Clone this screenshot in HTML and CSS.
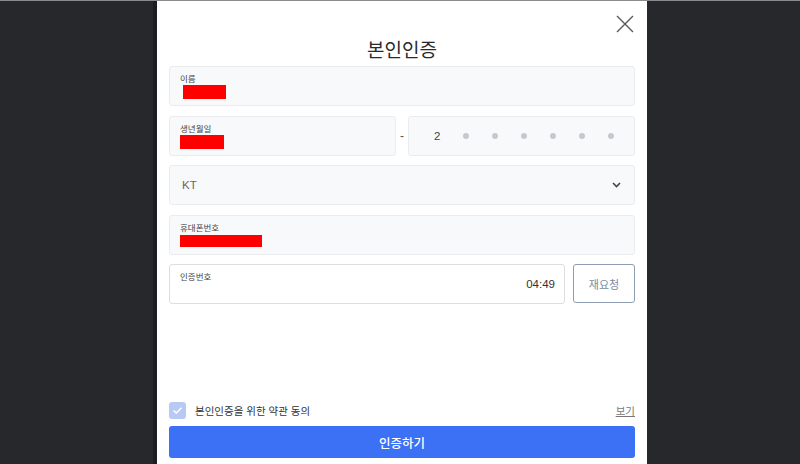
FILE: index.html
```html
<!DOCTYPE html>
<html lang="ko">
<head>
<meta charset="utf-8">
<title>본인인증</title>
<link rel="stylesheet" href="styles.css">
</head>
<body>
<div class="stage">
  <div class="modal">
    <button class="close" aria-label="닫기">
      <svg width="18" height="18" viewBox="0 0 18 18"><path d="M1 1 L17 17 M17 1 L1 17" stroke="#5a5a5a" stroke-width="1.4" fill="none"/></svg>
    </button>
    <div class="header"><h1 class="title">본인인증</h1></div>
    <div class="form">
      <div class="field">
        <span class="label">이름</span>
        <span class="redact redact-name"></span>
      </div>
      <div class="row">
        <div class="field field-half">
          <span class="label">생년월일</span>
          <span class="redact redact-birth"></span>
        </div>
        <span class="dash">-</span>
        <div class="field field-half back">
          <span class="digit">2</span>
          <span class="dot"></span><span class="dot"></span><span class="dot"></span><span class="dot"></span><span class="dot"></span><span class="dot"></span>
        </div>
      </div>
      <div class="field select">
        <span class="select-text">KT</span>
        <svg class="chev" width="9" height="6" viewBox="0 0 9 6"><path d="M1 1 L4.5 4.5 L8 1" stroke="#444" stroke-width="1.6" fill="none"/></svg>
      </div>
      <div class="field">
        <span class="label">휴대폰번호</span>
        <span class="redact redact-phone"></span>
      </div>
      <div class="row">
        <div class="field code">
          <span class="label">인증번호</span>
          <span class="timer">04:49</span>
        </div>
        <button class="resend">재요청</button>
      </div>
    </div>
    <div class="bottom">
      <div class="agree">
        <span class="check">
          <svg width="11" height="9" viewBox="0 0 11 9"><path d="M1.5 4.5 L4.3 7 L9.5 1.8" stroke="#fff" stroke-width="1.5" fill="none"/></svg>
        </span>
        <span class="agree-text">본인인증을 위한 약관 동의</span>
        <a class="view" href="#">보기</a>
      </div>
      <button class="submit">인증하기</button>
    </div>
  </div>
</div>
</body>
</html>
```
FILE: styles.css
```css
* { box-sizing: border-box; }
html, body { margin: 0; padding: 0; }
body {
  background: #26282c;
  font-family: "Noto Sans CJK KR", "Noto Sans", sans-serif;
  height: 464px;
  overflow: hidden;
  border-top: 1px solid #8a8b8e;
}
.stage {
  display: flex;
  justify-content: center;
  height: 463px;
  padding-left: 4px;
}
.modal {
  position: relative;
  width: 490px;
  height: 463px;
  background: #fff;
  box-shadow: -4px 0 0 #1c1d20;
  padding: 0 12px 6px;
  display: flex;
  flex-direction: column;
}
.close {
  position: absolute;
  top: 14px;
  right: 13px;
  padding: 0;
  border: 0;
  background: none;
  width: 18px;
  height: 18px;
}
.close svg { display: block; }
.header {
  height: 65px;
  display: flex;
  align-items: flex-end;
  justify-content: center;
  padding-bottom: 5px;
}
.title {
  margin: 0;
  font-size: 19px;
  line-height: 24px;
  font-weight: 400;
  color: #2a2a2a;
}
.form {
  display: flex;
  flex-direction: column;
  gap: 9.5px;
}
.row {
  display: flex;
  align-items: stretch;
}
.field {
  position: relative;
  height: 40px;
  background: #f8f9fb;
  border: 1px solid #eaecef;
  border-radius: 3px;
  padding: 6px 10px 0;
  display: flex;
  flex-direction: column;
  align-items: flex-start;
}
.label {
  font-size: 8.5px;
  line-height: 10px;
  color: #444;
}
.redact {
  display: block;
  background: #f00;
  margin-top: 2px;
}
.redact-name { width: 43px; height: 14px; margin-left: 3px; }
.redact-birth { width: 44px; height: 14px; }
.redact-phone { width: 82px; height: 12px; margin-top: 3px; }
.field-half { width: 227px; flex: none; }
.dash {
  width: 12px;
  text-align: center;
  font-family: "Liberation Sans", sans-serif;
  font-size: 12px;
  color: #555;
  line-height: 40px;
}
.back {
  flex-direction: row;
  align-items: center;
  justify-content: space-between;
  padding: 0 20px 0 25px;
}
.digit {
  font-family: "Liberation Sans", sans-serif;
  font-size: 11.5px;
  color: #444;
}
.dot {
  width: 6px;
  height: 6px;
  border-radius: 50%;
  background: #c6c8cd;
}
.select {
  flex-direction: row;
  align-items: center;
  justify-content: space-between;
  padding: 0 13px 0 12px;
}
.select-text {
  font-family: "Liberation Sans", sans-serif;
  font-size: 11.5px;
  color: #666;
}
.chev { display: block; }
.code {
  flex: 1;
  background: #fff;
  border-color: #dcdee2;
  height: 40px;
}
.timer {
  position: absolute;
  right: 9px;
  top: 13px;
  font-family: "Liberation Sans", sans-serif;
  font-size: 11.5px;
  color: #333;
}
.resend {
  margin-left: 8px;
  width: 62px;
  height: 39px;
  background: #fff;
  border: 1px solid #8e9db3;
  border-radius: 3px;
  font-family: "Noto Sans CJK KR", sans-serif;
  font-size: 11px;
  color: #7b8ba3;
  padding: 0;
}
.bottom {
  margin-top: auto;
  display: flex;
  flex-direction: column;
}
.agree {
  display: flex;
  align-items: center;
  height: 18px;
  margin-bottom: 7px;
}
.check {
  width: 17px;
  height: 17px;
  border-radius: 3px;
  background: #b8c9f6;
  display: flex;
  align-items: center;
  justify-content: center;
}
.agree-text {
  margin-left: 9px;
  font-size: 10.5px;
  color: #333;
}
.view {
  margin-left: auto;
  font-size: 10.5px;
  color: #777;
  text-decoration: underline;
}
.submit {
  height: 32px;
  border: 0;
  border-radius: 3px;
  background: #3c70f5;
  color: #fff;
  font-family: "Noto Sans CJK KR", sans-serif;
  font-size: 12.5px;
  font-weight: 500;
  padding: 0;
}
```
